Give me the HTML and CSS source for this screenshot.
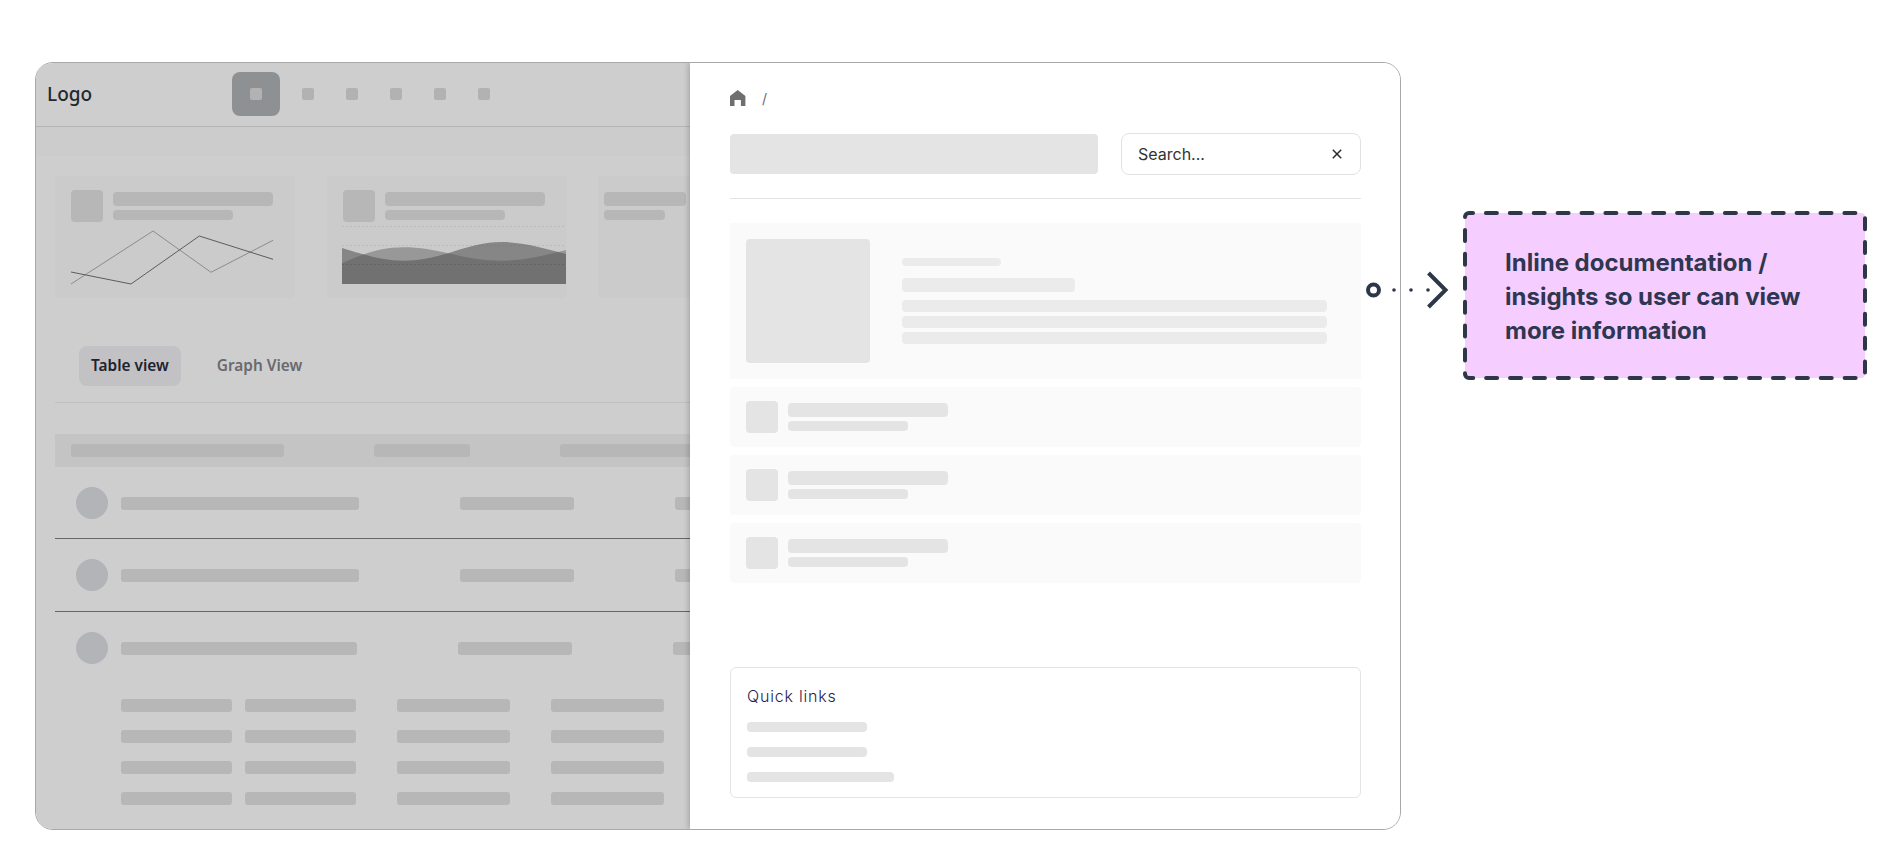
FILE: index.html
```html
<!DOCTYPE html>
<html lang="en">
<head>
    <meta charset="UTF-8">
    <meta name="viewport" content="width=device-width, initial-scale=1.0">
    <title>Inline documentation</title>
    <link rel="stylesheet" href="styles.css">
</head>
<body>
    <div class="page">
        <div class="frame">
            <!-- Dimmed app behind the panel -->
            <div class="app">
                <div class="topbar">
                    <div class="logo">Logo</div>
                    <div class="nav">
                        <div class="nav-active"><span class="nav-dot"></span></div>
                        <span class="nav-dot"></span>
                        <span class="nav-dot"></span>
                        <span class="nav-dot"></span>
                        <span class="nav-dot"></span>
                        <span class="nav-dot"></span>
                    </div>
                </div>
                <div class="band"></div>

                <div class="cards">
                    <div class="card">
                        <div class="card-head">
                            <div class="bone bone-icon"></div>
                            <div class="bone-stack">
                                <div class="bone bone-title"></div>
                                <div class="bone bone-sub"></div>
                            </div>
                        </div>
                        <svg class="line-chart" width="202" height="55" viewBox="0 0 202 55">
                            <polyline points="0,54 82,1 140,42.3 202,10.3" fill="none" stroke="#8c8c8c" stroke-width="1"/>
                            <polyline points="0,42 60,54 128.3,6 202,29.3" fill="none" stroke="#5c5c5c" stroke-width="1"/>
                        </svg>
                    </div>
                    <div class="card">
                        <div class="card-head">
                            <div class="bone bone-icon"></div>
                            <div class="bone-stack">
                                <div class="bone bone-title"></div>
                                <div class="bone bone-sub"></div>
                            </div>
                        </div>
                        <svg class="area-chart" width="224" height="60" viewBox="0 0 224 60">
                            <line x1="0" y1="2.5" x2="224" y2="2.5" stroke="#bababa" stroke-dasharray="2 2"/>
                            <line x1="0" y1="21.5" x2="224" y2="21.5" stroke="#bababa" stroke-dasharray="2 2"/>
                            <path d="M0 24 C20 30 40 36.7 61.3 36.7 C78 36.7 92 33 106.3 29.3 C122 24 140 18 159.7 18 C182 18 205 25 224 30 V60 H0 Z" fill="#555" fill-opacity="0.59"/>
                            <path d="M0 39.3 C20 30 40 23.3 61.3 23.3 C78 23.3 92 26 106.3 29.3 C122 33 140 36.7 159.7 36.7 C182 36.7 205 31 224 26 V60 H0 Z" fill="#555" fill-opacity="0.43"/>
                            <line x1="0" y1="40.5" x2="224" y2="40.5" stroke="#646464" stroke-dasharray="2 2"/>
                        </svg>
                    </div>
                    <div class="card card-cut">
                        <div class="bone-stack">
                            <div class="bone bone-title-cut"></div>
                            <div class="bone bone-sub-cut"></div>
                        </div>
                    </div>
                </div>

                <div class="tabs">
                    <div class="tab tab-active">Table view</div>
                    <div class="tab">Graph View</div>
                </div>
                <div class="tabs-rule"></div>

                <!-- Table -->
                <div class="table-head">
                    <div class="bone cell-head-a"></div>
                    <div class="bone cell-head-b"></div>
                    <div class="bone cell-head-c"></div>
                </div>
                <div class="row row-first">
                    <div class="avatar"></div>
                    <div class="bone cell-a"></div>
                    <div class="bone cell-b"></div>
                    <div class="bone cell-c"></div>
                </div>
                <div class="row">
                    <div class="avatar"></div>
                    <div class="bone cell-a"></div>
                    <div class="bone cell-b"></div>
                    <div class="bone cell-c"></div>
                </div>
                <div class="row row-open">
                    <div class="avatar"></div>
                    <div class="bone cell-a cell-a-open"></div>
                    <div class="bone cell-b"></div>
                    <div class="bone cell-c"></div>
                </div>
                <div class="sub-rows">
                    <div class="sub-row">
                        <div class="sub-pair"><div class="bone sub-narrow"></div><div class="bone sub-narrow"></div></div>
                        <div class="bone sub-wide"></div>
                        <div class="bone sub-wide"></div>
                    </div>
                    <div class="sub-row">
                        <div class="sub-pair"><div class="bone sub-narrow"></div><div class="bone sub-narrow"></div></div>
                        <div class="bone sub-wide"></div>
                        <div class="bone sub-wide"></div>
                    </div>
                    <div class="sub-row">
                        <div class="sub-pair"><div class="bone sub-narrow"></div><div class="bone sub-narrow"></div></div>
                        <div class="bone sub-wide"></div>
                        <div class="bone sub-wide"></div>
                    </div>
                    <div class="sub-row">
                        <div class="sub-pair"><div class="bone sub-narrow"></div><div class="bone sub-narrow"></div></div>
                        <div class="bone sub-wide"></div>
                        <div class="bone sub-wide"></div>
                    </div>
                </div>
            </div>

            <!-- Docs panel -->
            <div class="panel">
                <div class="crumbs">
                    <svg width="16" height="16" viewBox="0 0 16 16">
                        <path d="M7.7 0 L15.4 6 V16 H10.9 V10 H4.5 V16 H0 V6 Z" fill="#6f6f6f"/>
                    </svg>
                    <span class="crumb-sep">/</span>
                </div>
                <div class="panel-head">
                    <div class="panel-title"></div>
                    <div class="search">
                        <span>Search...</span>
                        <svg width="10" height="10" viewBox="0 0 10 10">
                            <path d="M0.8 0.8 L9.2 9.2 M9.2 0.8 L0.8 9.2" stroke="#2a2a2a" stroke-width="1.5" fill="none"/>
                        </svg>
                    </div>
                </div>
                <div class="panel-rule"></div>

                <div class="feature">
                    <div class="feature-image"></div>
                    <div class="feature-text">
                        <div class="light light-kicker"></div>
                        <div class="light light-heading"></div>
                        <div class="light light-line"></div>
                        <div class="light light-line"></div>
                        <div class="light light-line"></div>
                    </div>
                </div>
                <div class="doc-row">
                    <div class="doc-icon"></div>
                    <div class="bone-stack">
                        <div class="doc-title"></div>
                        <div class="doc-sub"></div>
                    </div>
                </div>
                <div class="doc-row">
                    <div class="doc-icon"></div>
                    <div class="bone-stack">
                        <div class="doc-title"></div>
                        <div class="doc-sub"></div>
                    </div>
                </div>
                <div class="doc-row">
                    <div class="doc-icon"></div>
                    <div class="bone-stack">
                        <div class="doc-title"></div>
                        <div class="doc-sub"></div>
                    </div>
                </div>

                <div class="quick">
                    <div class="quick-title">Quick links</div>
                    <div class="quick-link"></div>
                    <div class="quick-link"></div>
                    <div class="quick-link quick-link-long"></div>
                </div>
            </div>
        </div>

        <!-- Annotation -->
        <div class="callout">
            <svg class="connector" width="90" height="40" viewBox="0 0 90 40">
                <circle cx="7.5" cy="20" r="5.5" fill="none" stroke="#2d3748" stroke-width="4"/>
                <circle cx="28" cy="20" r="1.8" fill="#2d3748"/>
                <circle cx="45" cy="20" r="1.8" fill="#2d3748"/>
                <circle cx="62" cy="20" r="1.8" fill="#2d3748"/>
                <path d="M62.5 3 L79.5 20 L62.5 37" fill="none" stroke="#2d3748" stroke-width="4"/>
            </svg>
            <svg class="callout-border" width="404" height="169" viewBox="0 0 404 169">
                <rect x="2" y="2" width="400" height="165" rx="4" fill="#f5ceff" stroke="#2d3748" stroke-width="4" stroke-linecap="round" stroke-dasharray="11 12.9" stroke-dashoffset="7"/>
            </svg>
            <p class="callout-text">Inline documentation / insights so user can view more information</p>
        </div>
    </div>
</body>
</html>
```

FILE: styles.css
```css
/* General Reset */
body {
    margin: 0;
    padding: 0;
    background: #ffffff;
    font-family: 'Inter', sans-serif;
    overflow: hidden;
}

.page {
    display: flex;
    align-items: flex-start;
    padding: 62px 0 0 35px;
    height: 863px;
    box-sizing: border-box;
    position: relative;
}

.frame {
    display: flex;
    width: 1366px;
    height: 768px;
    box-sizing: border-box;
    border: 1px solid #a8a8a8;
    border-radius: 18px;
    overflow: hidden;
    flex-shrink: 0;
}

/* Dimmed app */
.app {
    width: 654px;
    flex-shrink: 0;
    background: #cecece;
    overflow: hidden;
}

.topbar {
    display: flex;
    align-items: center;
    height: 64px;
    box-sizing: border-box;
    padding: 0 0 1px 11px;
    border-bottom: 1px solid #b4b4b4;
}

.logo {
    width: 185px;
    padding-bottom: 1px;
    font-family: 'Noto Sans', sans-serif;
    font-size: 19px;
    font-weight: 500;
    color: #1f2a30;
}

.nav {
    display: flex;
    align-items: center;
    gap: 32px;
}

.nav-active {
    display: flex;
    align-items: center;
    justify-content: center;
    width: 48px;
    height: 44px;
    margin-right: -10px;
    border-radius: 8px;
    background: #8e9193;
}

.nav-dot {
    display: block;
    width: 12px;
    height: 12px;
    border-radius: 2px;
    background: #b2b2b2;
}

.band {
    height: 29px;
    background: #cccccc;
}

.cards {
    display: flex;
    gap: 32px;
    margin: 20px 0 0 19px;
}

.card {
    flex-shrink: 0;
    width: 240px;
    height: 122px;
    box-sizing: border-box;
    padding: 14px 16px;
    border-radius: 4px;
    background: #cbcbcb;
}

.card-cut {
    width: 110px;
    margin-left: -1px;
    padding: 16px 6px;
}

.card-head {
    display: flex;
    gap: 10px;
    align-items: center;
}

.bone {
    border-radius: 4px;
    background: #b7b7b7;
    flex-shrink: 0;
}

.bone-icon {
    width: 32px;
    height: 32px;
}

.bone-stack {
    display: flex;
    flex-direction: column;
    gap: 4px;
}

.bone-title {
    width: 160px;
    height: 14px;
}

.bone-sub {
    width: 120px;
    height: 10px;
}

.bone-title-cut {
    width: 82px;
    height: 14px;
}

.bone-sub-cut {
    width: 61px;
    height: 10px;
}

.line-chart {
    display: block;
    margin-top: 8px;
}

.area-chart {
    display: block;
    margin: 2px 0 0 -1px;
}

/* Tabs */
.tabs {
    display: flex;
    gap: 24px;
    margin: 48px 0 0 43px;
}

.tab {
    height: 40px;
    padding: 0 12px;
    border-radius: 8px;
    font-family: 'Noto Sans', sans-serif;
    font-size: 15.4px;
    font-weight: 600;
    line-height: 40px;
    color: #6a6a6e;
}

.tab-active {
    background: #c2c2c5;
    color: #20222e;
}

.tabs-rule {
    height: 1px;
    margin: 16px 0 0 19px;
    background: #c0c0c0;
}

/* Table */
.table-head {
    display: flex;
    align-items: center;
    gap: 90px;
    height: 33px;
    margin: 31px 0 0 19px;
    padding-left: 16px;
    background: #c4c4c4;
}

.cell-head-a {
    width: 213px;
    height: 13px;
    border-radius: 3px;
}

.cell-head-b {
    width: 96px;
    height: 13px;
    border-radius: 3px;
}

.cell-head-c {
    width: 160px;
    height: 13px;
    border-radius: 3px;
}

.row {
    display: flex;
    align-items: center;
    margin-left: 19px;
    padding: 20px 0 20px 21px;
    border-bottom: 1px solid #666666;
}

.row-first {
    padding-bottom: 19px;
}

.row-open {
    border-bottom: 0;
    padding-bottom: 0;
}

.avatar {
    flex-shrink: 0;
    width: 32px;
    height: 32px;
    margin-right: 13px;
    border-radius: 50%;
    background: #b3b4b8;
}

.cell-a {
    width: 238px;
    height: 13px;
    margin-right: 101px;
    border-radius: 3px;
}

.cell-a-open {
    width: 236px;
}

.cell-b {
    width: 114px;
    height: 13px;
    margin-right: 101px;
    border-radius: 3px;
}

.cell-c {
    width: 100px;
    height: 13px;
    border-radius: 3px;
}

.sub-rows {
    display: flex;
    flex-direction: column;
    gap: 18px;
    margin: 35px 0 0 85px;
}

.sub-row {
    display: flex;
    gap: 41px;
}

.sub-pair {
    display: flex;
    gap: 13px;
}

.sub-narrow {
    width: 111px;
    height: 13px;
    border-radius: 3px;
}

.sub-wide {
    width: 113px;
    height: 13px;
    border-radius: 3px;
}

/* Docs panel */
.panel {
    flex: 1;
    display: flex;
    flex-direction: column;
    padding: 27px 39px 31px 40px;
    background: #ffffff;
    box-shadow: -2px 0 5px rgba(0, 0, 0, 0.18);
    z-index: 1;
}

.crumbs {
    display: flex;
    align-items: center;
    gap: 16px;
    height: 16px;
}

.crumb-sep {
    font-size: 14px;
    color: #6b6680;
}

.panel-head {
    display: flex;
    align-items: center;
    gap: 23px;
    margin-top: 27px;
}

.panel-title {
    width: 368px;
    height: 40px;
    border-radius: 4px;
    background: #e4e4e4;
}

.search {
    display: flex;
    align-items: center;
    justify-content: space-between;
    width: 240px;
    height: 42px;
    box-sizing: border-box;
    padding: 0 18px 0 16px;
    border: 1px solid #e2e2e2;
    border-radius: 8px;
    font-size: 16px;
    color: #333333;
}

.panel-rule {
    height: 1px;
    margin-top: 23px;
    background: #e4e4e4;
}

.feature {
    display: flex;
    gap: 32px;
    margin-top: 24px;
    padding: 16px 34px 16px 16px;
    background: #fafafa;
}

.feature-image {
    flex-shrink: 0;
    width: 124px;
    height: 124px;
    border-radius: 4px;
    background: #e4e4e4;
}

.feature-text {
    flex: 1;
    padding-top: 19px;
}

.light {
    border-radius: 4px;
    background: #ebebeb;
}

.light-kicker {
    width: 99px;
    height: 8px;
}

.light-heading {
    width: 173px;
    height: 14px;
    margin: 12px 0 8px;
}

.light-line {
    height: 12px;
    margin-bottom: 4px;
}

.doc-row {
    display: flex;
    align-items: center;
    gap: 10px;
    height: 60px;
    margin-top: 8px;
    padding-left: 16px;
    border-radius: 4px;
    background: #fafafa;
}

.doc-icon {
    width: 32px;
    height: 32px;
    border-radius: 4px;
    background: #e4e4e4;
}

.doc-title {
    width: 160px;
    height: 14px;
    border-radius: 4px;
    background: #e4e4e4;
}

.doc-sub {
    width: 120px;
    height: 10px;
    border-radius: 4px;
    background: #e4e4e4;
}

.quick {
    display: flex;
    flex-direction: column;
    gap: 15px;
    margin-top: auto;
    height: 131px;
    box-sizing: border-box;
    padding: 18px 16px 0;
    border: 1px solid #e4e4e4;
    border-radius: 6px;
}

.quick-title {
    margin-bottom: 1px;
    font-size: 16px;
    font-weight: 300;
    letter-spacing: 0.8px;
    line-height: 20px;
    color: #1f1d4d;
}

.quick-link {
    width: 120px;
    height: 10px;
    border-radius: 4px;
    background: #e4e4e4;
}

.quick-link-long {
    width: 147px;
}

/* Annotation */
.callout {
    position: relative;
    flex-shrink: 0;
    width: 404px;
    height: 169px;
    box-sizing: border-box;
    margin: 149px 0 0 62px;
    padding: 35px 40px 0 42px;
    z-index: 2;
}

.connector {
    position: absolute;
    left: -97px;
    top: 59px;
}

.callout-border {
    position: absolute;
    left: 0;
    top: 0;
}

.callout-text {
    position: relative;
    margin: 0;
    font-size: 24px;
    font-weight: 700;
    line-height: 34px;
    color: #2f3650;
}
```
